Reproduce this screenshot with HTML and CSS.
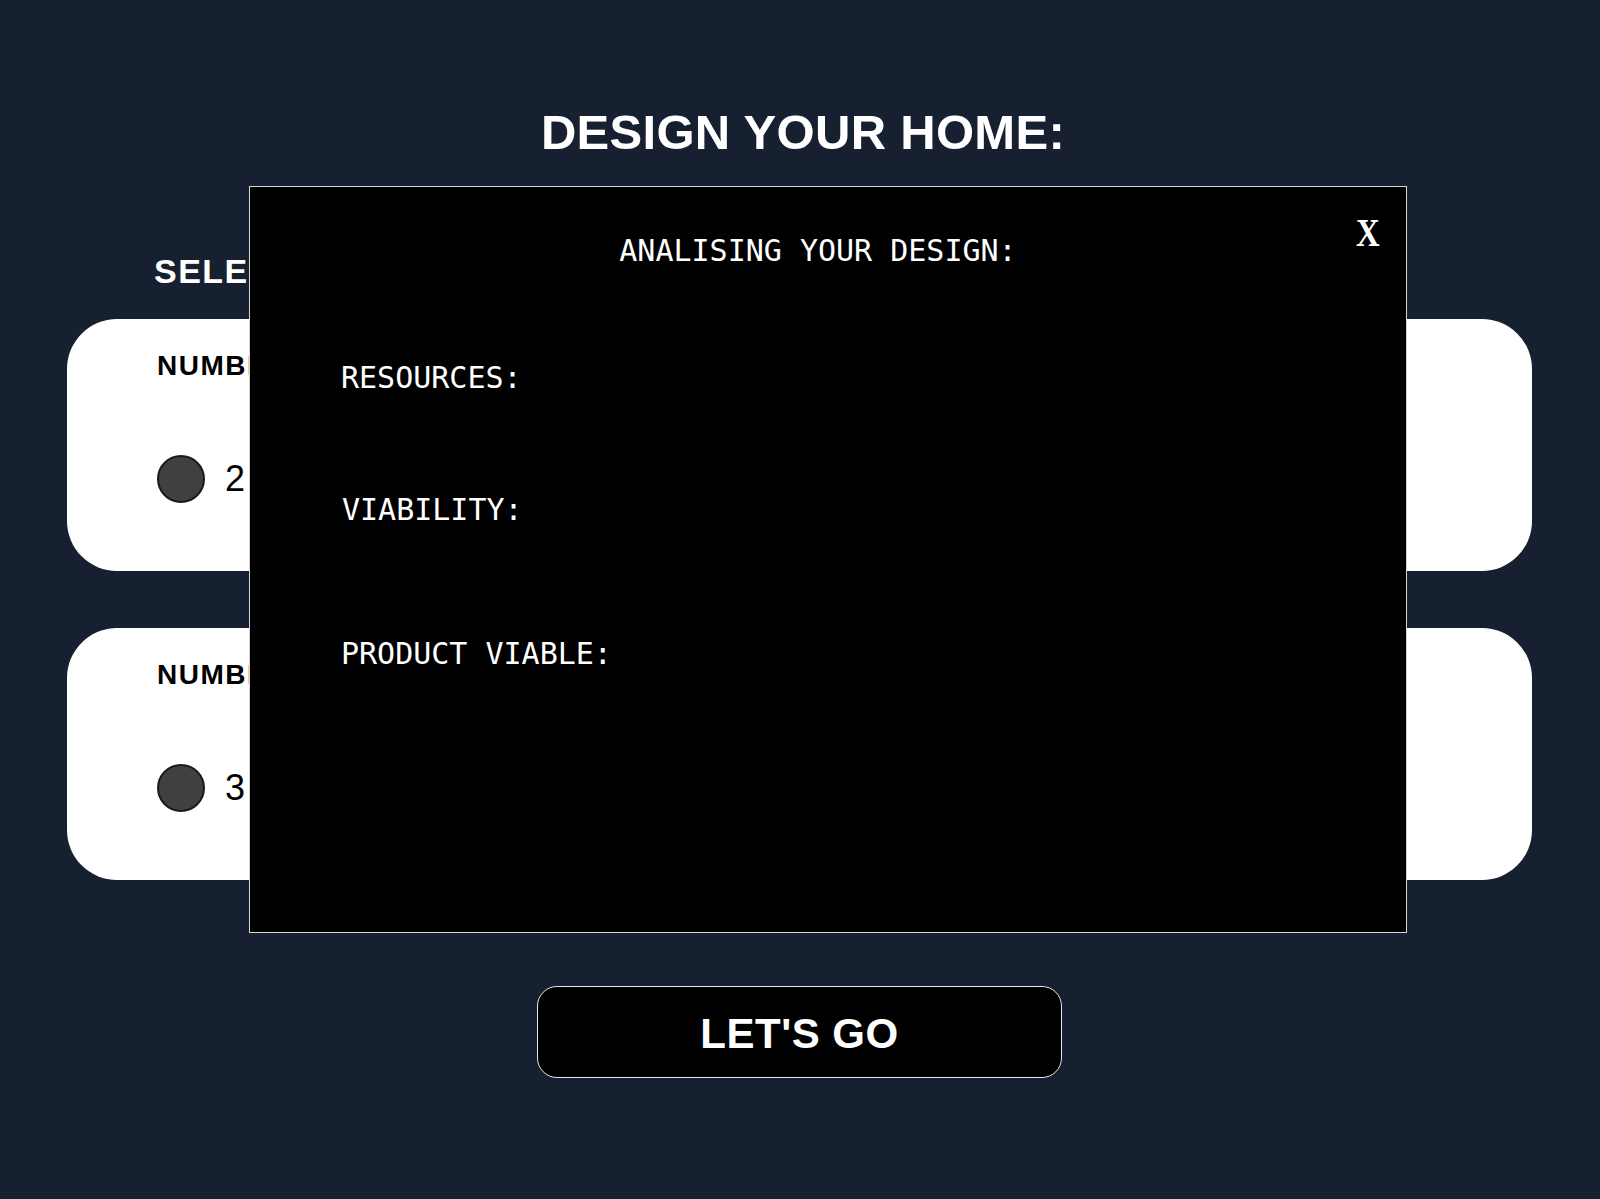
FILE: index.html
```html
<!DOCTYPE html>
<html lang="en">
<head>
<meta charset="utf-8">
<title>Design your home</title>
<link rel="stylesheet" href="styles.css">
</head>
<body>
<main class="page">
  <h1 class="title">DESIGN YOUR HOME:</h1>
  <section class="options">
    <h2 class="section-title">SELECT YOUR OPTIONS:</h2>
    <div class="card">
      <h3 class="card-label">NUMBER OF FLOORS:</h3>
      <div class="choices">
        <label class="choice"><span class="radio"></span><span class="choice-text">2</span></label>
        <label class="choice"><span class="radio"></span><span class="choice-text">3</span></label>
        <label class="choice"><span class="radio"></span><span class="choice-text">4</span></label>
      </div>
    </div>
    <div class="card">
      <h3 class="card-label">NUMBER OF ROOMS:</h3>
      <div class="choices">
        <label class="choice"><span class="radio"></span><span class="choice-text">3</span></label>
        <label class="choice"><span class="radio"></span><span class="choice-text">4</span></label>
        <label class="choice"><span class="radio"></span><span class="choice-text">5</span></label>
      </div>
    </div>
  </section>
  <div class="actions">
    <button class="go" type="button">LET'S GO</button>
  </div>
</main>

<div class="modal">
  <button class="close" type="button">X</button>
  <h2 class="modal-title">ANALISING YOUR DESIGN:</h2>
  <p class="line line-resources">RESOURCES:</p>
  <p class="line line-viability">VIABILITY:</p>
  <p class="line line-product">PRODUCT VIABLE:</p>
</div>
</body>
</html>
```

FILE: styles.css
```css
* {
  box-sizing: border-box;
}

html, body {
  margin: 0;
  padding: 0;
}

body {
  background: #172031;
  font-family: "Liberation Sans", Arial, sans-serif;
  width: 1600px;
  height: 1199px;
  overflow: hidden;
  position: relative;
}

.page {
  padding: 108px 68px 0 67px;
}

.title {
  margin: 0;
  padding-left: 7px;
  font-size: 49px;
  line-height: 49px;
  font-weight: 700;
  color: #ffffff;
  text-align: center;
  letter-spacing: 0.3px;
}

.section-title {
  margin: 97px 0 31px;
  padding-left: 87px;
  font-size: 34px;
  line-height: 34px;
  font-weight: 700;
  color: #ffffff;
  white-space: nowrap;
  letter-spacing: 1.5px;
}

.card {
  background: #ffffff;
  border-radius: 50px;
  height: 252px;
  padding: 33px 0 0 90px;
}

.card + .card {
  margin-top: 57px;
}

.card-label {
  margin: 0;
  font-size: 28px;
  line-height: 28px;
  font-weight: 700;
  color: #000000;
  letter-spacing: 1.5px;
}

.choices {
  margin-top: 75px;
  display: flex;
  gap: 120px;
}

.choice {
  display: flex;
  align-items: center;
  gap: 20px;
}

.radio {
  width: 48px;
  height: 48px;
  border-radius: 50%;
  background: #404040;
  border: 2px solid #1a1a1a;
}

.choice-text {
  font-size: 36px;
  line-height: 36px;
  color: #000000;
}

.actions {
  margin-top: 106px;
  display: flex;
  justify-content: center;
}

.go {
  width: 525px;
  height: 92px;
  padding: 4px 0 0;
  background: #000000;
  border: 1.5px solid #e8e8e8;
  border-radius: 20px;
  color: #ffffff;
  font-family: "Liberation Sans", Arial, sans-serif;
  font-size: 42px;
  line-height: 42px;
  font-weight: 700;
  letter-spacing: 0.5px;
}

.modal {
  position: absolute;
  left: 249px;
  top: 186px;
  width: 1158px;
  height: 747px;
  background: #000000;
  border: 1px solid #d6d6d6;
  padding: 49px 0 0 91px;
  font-family: "DejaVu Sans Mono", "Liberation Mono", monospace;
  color: #ffffff;
}

.close {
  position: absolute;
  top: 25px;
  right: 26px;
  padding: 0;
  margin: 0;
  background: none;
  border: 0;
  color: #ffffff;
  font-family: "Liberation Serif", "Times New Roman", serif;
  font-weight: 700;
  font-size: 41px;
  line-height: 41px;
  transform: scaleX(0.8);
  transform-origin: right center;
}

.modal-title {
  margin: 0 0 0 -91px;
  padding-right: 20px;
  font-size: 30px;
  line-height: 30px;
  font-weight: 400;
  text-align: center;
}

.line {
  margin: 0;
  font-size: 30px;
  line-height: 30px;
}

.line-resources {
  margin-top: 97px;
}

.line-viability {
  margin-top: 102px;
  padding-left: 1px;
}

.line-product {
  margin-top: 114px;
}
```
